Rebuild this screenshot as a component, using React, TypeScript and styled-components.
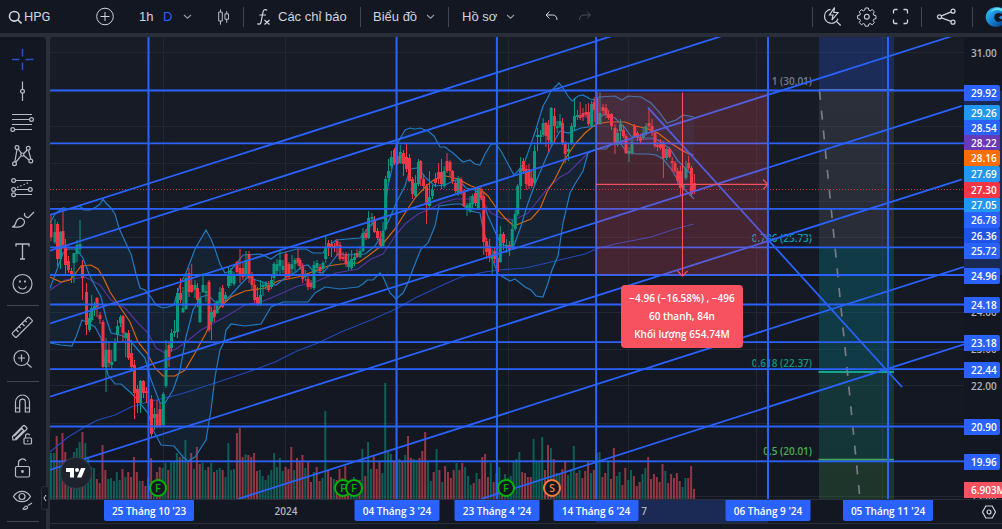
import React from "react";
import styled, { createGlobalStyle } from "styled-components";

const GlobalStyle = createGlobalStyle`
  * { box-sizing: border-box; }
  html, body, #root { height: 100%; }
  body { margin: 0; background: #2a2e39; overflow: hidden; }
  button { font: inherit; color: inherit; background: none; border: 0; padding: 0; cursor: pointer; }
`;

const UI_FONT = `"Liberation Sans", Arial, sans-serif`;
const CHART_FONT = `"Open Sans", "Noto Sans", sans-serif`;

const Page = styled.div`
  display: grid;
  grid-template-rows: 33px minmax(0, 1fr);
  gap: 4px;
  height: 100vh;
  font: 13px ${UI_FONT};
  color: #d1d4dc;
`;

const TopBar = styled.header`
  display: flex;
  align-items: center;
  background: #131722;
  overflow: hidden;
`;

const TopButton = styled.button<{ $w: number; $accent?: boolean; $dim?: boolean }>`
  display: flex;
  flex: none;
  align-items: center;
  justify-content: space-between;
  width: ${(p) => p.$w}px;
  height: 32px;
  white-space: nowrap;
  color: ${(p) => (p.$accent ? "#2962ff" : p.$dim ? "#4a4e59" : "#d1d4dc")};
`;

const IconButton = styled(TopButton)`
  justify-content: center;
`;

const Symbol = styled.button`
  && {
    display: flex;
    align-items: center;
    gap: 2px;
    flex: none;
    width: 83px;
    height: 32px;
    margin-left: 8px;
    font-family: Roboto, sans-serif;
  }
`;

const Group = styled.div<{ $gap?: number; $px: number }>`
  display: flex;
  align-items: center;
  gap: ${(p) => p.$gap ?? 0}px;
  padding: 0 ${(p) => p.$px}px;
`;

const VRule = styled.span`
  flex: none;
  width: 1px;
  height: 20px;
  background: #434651;
`;

const Spacer = styled.span`
  flex: 1;
`;

const Body = styled.div`
  display: grid;
  grid-template-columns: 46px minmax(0, 1fr);
  gap: 4px;
  min-height: 0;
`;

const Tools = styled.nav`
  position: relative;
  display: flex;
  flex-direction: column;
  align-items: center;
  padding-top: 6px;
  background: #131722;
  border-top-right-radius: 4px;
`;

const ToolButton = styled.button<{ $active?: boolean }>`
  && {
    display: flex;
    flex: none;
    align-items: center;
    justify-content: center;
    width: 44px;
    height: 32px;
    margin-right: 2px;
    color: ${(p) => (p.$active ? "#2450c8" : "#b8bbc4")};
  }
`;

const HRule = styled.span`
  flex: none;
  width: 32px;
  height: 1px;
  margin: 6px 0 5px;
  background: #434651;
`;

const Collapse = styled.button`
  && {
    position: absolute;
    right: -3px;
    bottom: 19px;
    display: flex;
    align-items: center;
    justify-content: center;
    width: 8px;
    height: 24px;
    background: #131722;
    border: 1px solid #2a2e39;
    border-radius: 3px;
  }
`;

const ChartArea = styled.main`
  display: grid;
  grid-template-columns: minmax(0, 1fr) 38px;
  grid-template-rows: minmax(0, 1fr) 25px 5px;
  background: #131722;
  border-top-left-radius: 4px;
  overflow: hidden;
  font: 600 10px ${CHART_FONT};
`;

const Pane = styled.section`
  position: relative;
  background: linear-gradient(#181c27, #131722);
  overflow: hidden;
`;

const Plot = styled.svg`
  position: relative;
  display: block;
  width: 100%;
  height: 100%;
`;

const FibLabel = styled.span<{ $c: string }>`
  position: absolute;
  transform: translate(-100%, -50%);
  color: ${(p) => p.$c};
  white-space: nowrap;
  line-height: 16px;
`;

const Marker = styled.button<{ $c: string }>`
  && {
    position: absolute;
    width: 18px;
    height: 18px;
    margin: -9px 0 0 -9px;
    border: 2px solid ${(p) => p.$c};
    border-radius: 50%;
    background: #131722;
    color: ${(p) => p.$c};
    font: 600 11px/14px ${CHART_FONT};
  }
`;

const LogoBadge = styled.a`
  position: absolute;
  display: flex;
  align-items: center;
  justify-content: center;
  width: 30px;
  height: 30px;
  margin: -15px 0 0 -15px;
  border-radius: 50%;
  background: #1e222d;
  box-shadow: 0 0 0 1px #363a45;
`;

const Measure = styled.div`
  position: absolute;
  width: 122px;
  margin-left: -61px;
  padding: 4px 0 5px;
  border-radius: 4px;
  background: #f7525f;
  color: #fff;
  text-align: center;
  line-height: 18px;
  white-space: nowrap;
`;

const PriceAxis = styled.aside`
  position: relative;
  overflow: hidden;
`;

const AxisRange = styled.div`
  position: absolute;
  left: 0;
  width: 100%;
  background: #1a2a54;
`;

const PriceTag = styled.span<{ $bg?: string; $wide?: boolean }>`
  position: absolute;
  left: 0;
  width: ${(p) => (p.$wide ? 44 : 36)}px;
  height: 16px;
  padding-left: 7px;
  transform: translateY(-50%);
  line-height: 16px;
  border-radius: 0 2px 2px 0;
  background: ${(p) => p.$bg ?? "transparent"};
  color: ${(p) => (p.$bg ? "#fff" : "#b2b5be")};
`;

const TimeAxis = styled.div`
  position: relative;
  border-top: 1px solid #2a2e39;
  border-bottom: 1px solid #2a2e39;
`;

const TimeRange = styled(AxisRange)`
  height: 100%;
  width: auto;
`;

const DateTag = styled.span<{ $w?: number }>`
  position: absolute;
  top: 0;
  height: 21px;
  width: ${(p) => (p.$w ? `${p.$w}px` : "auto")};
  transform: translateX(-50%);
  border-radius: 0 0 2px 2px;
  background: ${(p) => (p.$w ? "#2962ff" : "transparent")};
  color: ${(p) => (p.$w ? "#fff" : "#b2b5be")};
  text-align: center;
  line-height: 22px;
  white-space: nowrap;
`;

const AxisCorner = styled.button`
  && {
    display: flex;
    align-items: center;
    justify-content: center;
    padding-left: 12px;
    border-top: 1px solid #2a2e39;
    border-bottom: 1px solid #2a2e39;
  }
`;

/* Chart space: x 50..964, y 37..499 */
const VIEW = { x: 50, y: 37, w: 914, h: 462 };
const left = (x: number) => `${((x - VIEW.x) / VIEW.w) * 100}%`;
const top = (y: number) => `${((y - VIEW.y) / VIEW.h) * 100}%`;

const gridY = [52.5, 89.5, 126.5, 163.5, 201.5, 237.5, 275.5, 312.5, 349.5, 385.5, 423.5, 460.5, 496.5];
const gridX = [163.5, 285.5, 397.5, 508.5, 628.5, 756.5, 882.5];
const levels = [90.5, 143.4, 208.8, 247.4, 275, 304.5, 342.2, 369.2, 426.5, 461.4];
const dates = [148.5, 396.5, 496.9, 596.1, 768, 888];
const trends = [
  [50, 215, 612, 36],
  [50, 250.7, 722, 36],
  [50, 323.5, 951, 36.5],
  [50, 396.7, 962, 105.8],
  [50, 470, 962, 179.3],
  [238, 499, 964, 266.8],
  [481, 499, 964, 344.4],
  [648, 107.7, 902, 387],
];

const upper =
  "50 223 55 214 63 208 70 209 80 206 84 210 90 210 96 207 100 204 103 199 106 203 110 207 115 214 119 228 128 248 131 254 136 274 140 288 145 290 151 297 156 305 163 308 168 307 174 305 176 297 181 282 186 273 195 249 206 230 211 239 215 249 220 264 225 273 230 271 236 264 243 255 261 254 271 259 278 254 297 249 306 249 313 253 323 253 326 248 336 240 360 238 368 228 376 220 384 218 388 186 393 164 396 146 405 130 410 128 415 129 420 128 428 131 434 136 440 147 445 147 453 153 463 162 470 160 475 164 480 165 485 154 491 144 496 144 501 151 508 164 514 175 518 171 525 161 531 144 536 129 543 106 547 99 551 91 559 83 563 88 568 96 572 101 578 96 583 95 590 99 596 100 599 97 615 96 622 100 628 96 641 97 651 103 660 113 667 123 676 120 683 115 694 117";
const lower =
  "50 343 61 345 72 346 76 337 82 320 88 323 95 327 101 338 103 353 108 375 115 384 121 384 130 392 136 398 143 407 148 413 153 430 161 445 174 446 183 457 188 461 195 457 206 440 211 410 215 377 220 350 224 342 226 330 231 324 245 326 261 324 271 307 283 302 297 302 308 302 315 293 325 287 340 289 358 287 363 284 367 280 373 280 380 273 383 277 390 293 396 299 403 293 408 283 413 269 421 249 428 243 435 226 439 206 455 204 461 204 470 211 480 213 483 229 490 253 498 274 510 281 515 279 525 287 531 290 536 296 543 297 548 283 552 270 558 256 563 223 570 193 575 184 583 171 588 153 596 149 606 149 611 144 620 143 626 151 636 154 648 154 656 155 663 159 672 170 679 183 685 190 694 199";
const fast =
  "50 288 55 275 63 253 68 249 76 249 83 258 89 274 94 284 101 297 106 318 111 333 120 335 128 338 138 350 145 358 150 377 155 390 160 403 165 403 173 390 180 370 186 337 193 310 201 297 208 295 215 302 223 302 231 295 240 285 248 277 256 280 266 283 276 285 285 278 296 272 302 266 308 265 313 271 323 273 331 263 338 254 348 255 365 254 375 246 381 236 390 218 396 203 405 186 410 169 418 168 426 178 435 186 445 185 458 179 466 188 475 190 481 196 488 216 497 236 501 244 513 248 521 226 528 203 535 184 547 156 550 149 560 131 568 133 581 128 596 126 598 118 606 114 615 118 625 128 631 136 645 138 655 138 662 143 670 149 678 161 685 168 693 176";
const basis =
  "50 277 61 282 70 280 75 274 81 266 91 265 98 269 103 277 110 292 120 307 130 322 138 342 147 353 155 368 163 376 175 376 185 370 195 353 206 333 215 313 221 306 231 297 245 291 265 288 278 281 298 277 315 271 328 266 341 264 358 263 368 256 381 246 395 229 405 213 415 198 426 186 435 179 446 176 458 179 471 186 480 189 488 196 497 209 505 218 514 226 521 223 531 219 540 209 547 192 555 179 565 159 575 144 585 133 596 124 608 122 625 122 635 126 645 128 658 133 671 143 681 150 693 156";
const slow =
  "50 290 65 280 85 277 100 285 111 300 125 308 138 323 148 333 156 348 165 353 176 349 186 342 201 330 225 317 245 305 261 302 278 295 298 286 315 282 336 273 358 269 371 259 383 254 395 236 405 224 418 214 430 209 441 203 455 199 468 199 481 199 491 213 501 218 514 220 528 213 536 203 547 189 560 177 568 173 578 163 588 153 598 149 615 143 635 140 655 139 671 144 681 149 694 155";
const longAvg =
  "50 452 68 437 88 425 98 420 115 415 131 407 148 402 181 394 215 383 248 372 275 362 297 351 318 343 341 332 371 320 398 308 415 298 445 284 461 277 485 272 498 270 525 268 547 263 568 258 585 254 596 249 615 244 651 237 675 229 694 224";

const bandArea = (() => {
  const nums = lower.split(" ");
  const back: string[] = [];
  for (let i = nums.length - 2; i >= 0; i -= 2) back.push(nums[i], nums[i + 1]);
  return `${upper} ${back.join(" ")}`;
})();

/* direction, x, high, body top, body bottom, low */
const candles = `
r51 214 224 237 241|g55 219 232 242 244|r57.5 222 224 259 266|g60.5 231 232 259 269|r63 209 231 245 249|r65.5 239 245 265 274|r68.5 256 261 270 273|r71.5 268 271 274 283|g74 253 253 263 283|g77 240 245 254 262|g80 220 244 249 254|r82.5 260 265 278 300|r86.5 283 292 325 335|g89.5 313 318 330 332|g91.7 295 308 320 322|g94.5 302 306 310 316|r97 297 298 307 317|r100 312 315 319 324|r103 320 322 367 368|g106 338 350 367 392|r109 342 350 363 367|g111.7 350 362 365 370|g115 338 343 361 362|g117.5 320 326 335 343|g120.5 315 317 323 327|r123 315 316 333 342|g125.7 332 333 338 357|r128.5 330 333 358 360|r131.5 340 353 367 369|r134.5 360 365 393 419|r137.5 385 389 403 413|g140.5 380 381 403 413|r143.5 380 381 393 398|r146.5 387 391 393 403|r151.5 395 399 434 438|g154.5 408 414 418 430|r157 400 414 426 428|r160 403 409 427 428|g163.3 392 394 425 427|g166 340 350 386 388|r169 342 345 357 367|g171.5 329 333 348 352|g174.5 320 331 333 337|g177.5 288 293 332 338|r180.5 278 293 300 303|g183 287 308 312 313|g186 273 278 309 310|r189 268 273 292 297|r191.7 264 285 292 293|g195 280 285 290 298|r197.5 283 288 300 307|g200 292 298 322 323|g203 273 285 292 293|g206 285 291 293 302|r209 280 282 330 332|g211.5 307 312 322 340|r214.3 303 310 317 322|g217 300 302 313 314|g220 287 292 303 307|r222.6 285 288 307 308|g225.5 292 295 299 301|g228.5 266 274 286 288|g231 268 271 283 286|g234 272 274 284 286|r237 261 262 272 275|r240 249 268 275 283|r243 263 268 277 280|g246 251 260 276 279|r249 251 254 278 283|r252 272 274 285 290|r254.7 280 285 300 303|r257.5 287 297 305 306|g260.5 280 295 305 306|g263 282 285 287 296|g266 281 283 286 290|r268.7 281 285 290 292|g271.5 275 280 287 289|g274 262 264 278 282|g277 259 264 271 276|g280 251 260 266 276|g283 260 266 270 273|r286 252 254 277 280|r289 262 264 277 279|g292 255 264 269 275|g295 258 260 264 272|r298 249 258 263 266|r300 258 260 266 270|r302.7 263 266 279 283|g305.3 270 275 277 281|r308 275 279 287 290|r311 280 283 287 289|g314 261 265 288 290|g317 260 263 268 270|r320 264 267 271 276|g323 261 263 269 273|g325.7 236 248 259 263|r328.5 240 243 247 256|r331.5 240 244 248 257|r334.5 243 246 248 252|r337 239 241 246 256|r340 242 245 259 261|r343 252 257 259 261|r346 252 254 264 267|g348.6 253 261 267 270|g351.6 250 259 268 270|g354.5 253 257 260 266|r357 249 253 257 258|g360 246 251 257 258|g363 228 233 251 252|r366 229 233 238 240|g368.6 211 218 238 239|g372 213 217 219 226|r374.5 216 219 232 233|r377.5 228 231 238 240|r380.3 231 239 245 247|g383 222 231 246 247|g385.6 176 179 229 231|g388.5 159 171 178 182|g391.3 151 157 166 169|r394.5 148 150 163 165|r397.3 143 156 164 165|g400.3 145 152 163 164|r403.5 150 153 164 176|r406.5 144 157 169 172|r409.5 154 158 181 182|r412.6 177 179 194 199|g415.5 175 183 196 197|g418.5 159 162 184 186|r420.7 160 161 179 186|r423.6 174 179 186 191|r426.6 184 186 205 224|g429.5 171 197 206 209|g432.5 185 190 196 199|r435.5 173 179 183 187|r438.6 163 172 179 184|r441.5 159 172 184 189|g444.2 166 171 186 188|r447 153 161 171 173|r450 160 162 171 177|r452.6 170 171 181 184|r455.6 180 183 191 193|g458.2 176 178 193 196|r461 177 179 193 195|r464 189 192 206 207|g467 203 205 208 216|g470 196 203 211 213|g472.6 194 196 204 209|r475.5 189 193 203 206|g478.3 186 188 208 210|r481 187 191 198 200|r483.7 192 196 242 255|r486.6 238 241 252 259|r489.6 239 246 258 262|g492.2 249 256 259 274|r494.7 247 251 259 263|r497.5 255 258 272 275|g500.3 226 234 262 263|r503.5 232 234 243 250|g506.6 239 245 247 253|r509.6 241 245 250 256|g512.2 220 229 248 249|g515.2 210 214 229 231|g517.7 184 186 214 216|g520.6 157 168 186 199|r523.5 158 161 171 174|r526.2 165 169 184 190|r529 164 169 186 189|r531.7 171 178 186 188|g534.5 145 151 183 185|g537.5 128 135 137 151|g540.5 130 135 137 143|g543.2 118 123 135 137|r546 122 123 136 147|r548.6 120 125 140 152|g551.2 107 108 143 146|r554.5 108 116 126 144|g557.2 121 126 128 133|g560 114 121 126 128|r562.5 118 123 143 145|r565.2 141 143 154 163|g568.5 143 149 152 161|g571.6 123 126 143 145|g574.5 98 116 127 130|g577.5 110 115 117 120|r580.2 102 115 118 120|r583 108 113 117 121|r586 104 112 115 118|r588.6 103 112 124 126|g591.6 101 104 126 128|r594.2 97 102 110 122|r597 91 99 124 125|g600 92 113 124 125|r603 104 107 111 115|r606 104 108 114 118|r608.6 110 114 118 120|r611.5 113 114 126 130|r615 124 128 143 154|g617.6 129 133 145 147|g620.5 119 124 131 145|r623.4 125 130 136 138|r626 134 136 153 154|g629 147 151 154 162|g632 139 142 153 155|r634.7 124 126 136 138|r637.5 131 133 138 141|r640.5 134 138 141 143|g643.2 127 133 138 140|g646 123 126 134 136|r649 108 123 126 130|r652 119 126 133 136|r655 132 133 146 148|r657.6 142 145 147 151|r660.5 139 143 148 150|r663.4 141 143 158 178|g666.5 148 149 158 160|r669.6 147 149 157 158|r672.2 157 161 163 172|r675 161 163 171 173|r677.7 168 171 181 184|r680.4 166 171 188 196|g683.3 184 185 188 190|g686 161 168 178 180|r688.6 156 163 168 170|r691.5 166 168 194 197|r694.4 174 183 191 194`
  .trim()
  .split("|")
  .map((row) => {
    const [x, high, a, b, low] = row.slice(1).split(" ").map(Number);
    return { up: row[0] === "g", x, high, a, b, low };
  });

/* volume columns, evenly spread between two x positions */
const volumes = [
  {
    from: 51,
    to: 297,
    bars:
      "g46 g46 r63 g37 r66 r47 g37 r32 g47 g51 g57 r67 g56 g42 g32 g31 r20 r16 r54 r29 g20 g21 g18 g27 g19 r30 g22 r27 r22 r42 r27 g18 r18 r13 r22 r41 g18 r27 r32 g31 g36 r29 g37 g37 g46 r42 g42 g59 r39 r46 g30 r52 r35 g36 g29 r32 g36 r27 g29 g31 r29 g22 g56 g29 g30 r66 r71 r42 g45 r44 r42 r46 r28 g29 g23 g19 g24 g29 g46 g32 g41 g28 r32 r30 r52 g29 r41",
  },
  {
    from: 299.6,
    to: 545,
    bars:
      "r38 r44 g31 r38 r17 g27 r32 r18 g21 g88 r29 r22 g20 r19 r30 r21 r33 r16 g17 g22 g17 r19 g50 r23 g57 g30 r44 r30 r37 g26 g116 g47 g45 r37 r39 g40 r37 g44 r63 r41 g40 g39 r41 r48 r67 g37 g18 r27 g50 r29 g17 r33 r27 r21 r29 g36 r29 r36 g32 g23 g14 r16 g26 r20 r42 r45 r22 g36 r17 r26 g32 r19 g25 g21 g23 g37 g40 g47 r27 r26 r22 r22 g60 g37 g38 g62 r29",
  },
  {
    from: 548,
    to: 694,
    bars:
      "r54 g51 r40 g26 g25 r30 r37 g24 g29 g53 r26 g29 r21 r28 r37 g26 r29 r46 g47 r22 r26 g38 r20 r51 g23 g27 r14 r31 g19 g29 r23 r13 r17 g25 g31 r42 r20 r25 r22 r17 r35 g28 r16 r25 r21 r26 r18 g12 g21 r21 r33 r10",
  },
].flatMap(({ from, to, bars }) => {
  const list = bars.split(" ");
  return list.map((b, i) => ({
    x: from + ((to - from) * i) / (list.length - 1),
    up: b[0] === "g",
    h: Number(b.slice(1)),
  }));
});

const BLUE = "#2962ff";
const SKY = "#2196f3";

const priceTags: { y: number; t: string; bg?: string; wide?: boolean }[] = [
  { y: 53, t: "31.00" },
  { y: 312, t: "24.00" },
  { y: 349, t: "23.00" },
  { y: 386, t: "22.00" },
  { y: 423, t: "21.00" },
  { y: 496, t: "19.00" },
  { y: 93, t: "29.92", bg: BLUE },
  { y: 113, t: "29.26", bg: SKY },
  { y: 128, t: "28.54", bg: BLUE },
  { y: 143, t: "28.22", bg: "#673ab7" },
  { y: 158, t: "28.16", bg: "#ff6d00" },
  { y: 174, t: "27.69", bg: SKY },
  { y: 205, t: "27.05", bg: SKY },
  { y: 190, t: "27.30", bg: "#f23645" },
  { y: 220, t: "26.78", bg: BLUE },
  { y: 236, t: "26.36", bg: "#1e53e5" },
  { y: 251, t: "25.72", bg: BLUE },
  { y: 276, t: "24.96", bg: BLUE },
  { y: 305, t: "24.18", bg: BLUE },
  { y: 343, t: "23.18", bg: BLUE },
  { y: 370, t: "22.44", bg: BLUE },
  { y: 427, t: "20.90", bg: BLUE },
  { y: 462, t: "19.96", bg: BLUE },
  { y: 490, t: "6.903M", bg: "#f7525f", wide: true },
];

const dateTags: { x: number; t: string; w?: number }[] = [
  { x: 286, t: "2024" },
  { x: 644, t: "7" },
  { x: 149, t: "25 Tháng 10 '23", w: 90 },
  { x: 397, t: "04 Tháng 3 '24", w: 85 },
  { x: 497, t: "23 Tháng 4 '24", w: 85 },
  { x: 596, t: "14 Tháng 6 '24", w: 85 },
  { x: 768, t: "06 Tháng 9 '24", w: 85 },
  { x: 888, t: "05 Tháng 11 '24", w: 90 },
];

const Icon = ({ children, s = 28, w = 1 }: { children: React.ReactNode; s?: number; w?: number }) => (
  <svg width={s} height={s} viewBox={`0 0 ${s} ${s}`} fill="none" stroke="currentColor" strokeWidth={w} aria-hidden="true">
    {children}
  </svg>
);

const Chevron = () => (
  <svg width="9" height="6" viewBox="0 0 9 6" fill="none" stroke="#9598a1" strokeWidth="1.2" aria-hidden="true">
    <path d="M1 1l3.500 3.200L8 1" />
  </svg>
);

const tools: ({ label: string; icon: React.ReactNode; active?: boolean } | null)[] = [
  { label: "Con trỏ", active: true, icon: <path d="M4 14.500h7.500M17.500 14.500h8M14.500 4v7.500M14.500 17.500v7.500" strokeWidth="1.500" /> },
  { label: "Đường dọc", icon: <><path d="M14.500 4.500v7.800M14.500 16.200v7.800" /><circle cx="14.500" cy="14.200" r="1.900" /></> },
  {
    label: "Fibonacci",
    icon: <><path d="M4 5.500h20M4 10.500h17.500M4 15.500h20M6.500 20.500H24" /><circle cx="23.500" cy="10.500" r="1.900" /><circle cx="4.800" cy="20.500" r="1.900" /></>,
  },
  {
    label: "Mẫu hình",
    icon: (
      <>
        <path d="M9 8.500L6.800 21M10.200 7.800l3.200 4.500M15.800 12.500l3.300-3.500M12.800 15.200L8 21M16 14.800l5 4.200M20.500 9.500l2.300 8.500" />
        <circle cx="9" cy="6.500" r="1.900" /><circle cx="20.200" cy="7.300" r="1.900" /><circle cx="14.300" cy="13.600" r="1.600" />
        <circle cx="6.500" cy="22.800" r="1.900" /><circle cx="22.800" cy="20" r="1.900" />
      </>
    ),
  },
  {
    label: "Dự báo",
    icon: (
      <>
        <path d="M7.500 7.500H24M7.500 16.500h13M7.500 21.500H24" /><path d="M9 14.500L22 9" strokeDasharray="1.500 2" />
        <circle cx="5.600" cy="7.500" r="1.900" /><circle cx="5.600" cy="16.500" r="1.900" /><circle cx="22.300" cy="16.500" r="1.900" /><circle cx="5.600" cy="21.800" r="1.900" />
      </>
    ),
  },
  {
    label: "Cọ vẽ",
    icon: <><path d="M4 22c3-.3 3.200-2.200 4-4.800 1-3.200 3.500-4.700 6-3.700 2.800 1.200 3.200 4 1.500 6.200-1.500 2-4 2.500-6.500 2.400-1.600 0-3.400.1-5-.1z" /><path d="M17 8q-1.500 2 .5 3.500t3 1L26 7" /></>,
  },
  { label: "Văn bản", icon: <path d="M8 9.500V7h13v2.500M14.500 7v15M12 22h5" strokeWidth="1.300" /> },
  {
    label: "Biểu tượng",
    icon: <><circle cx="14.500" cy="15" r="9.500" /><path d="M10.500 17.500c.8 1.600 2.200 2.500 4 2.500s3.200-.9 4-2.500" /><path d="M12 11.500v2M17 11.500v2" strokeWidth="1.800" /></>,
  },
  null,
  {
    label: "Đo",
    icon: <><path d="M4.500 19.800L19.800 4.500q.8-.8 1.600 0l2.600 2.600q.8.800 0 1.600L8.700 24q-.8.800-1.600 0l-2.600-2.600q-.8-.8 0-1.600z" /><path d="M8 16.500l2.500 2.500M11 13.500l1.700 1.700M14 10.500l2.500 2.500M17 7.500l1.700 1.700" /></>,
  },
  { label: "Phóng to", icon: <><circle cx="13.500" cy="13" r="7.500" /><path d="M13.500 9.500v7M10 13h7M19 18.500l4.500 4" /></> },
  null,
  {
    label: "Nam châm",
    icon: <><path d="M7.500 23v-10a7 7 0 0 1 14 0v10h-4.200v-10a2.800 2.800 0 0 0-5.600 0v10z" /><path d="M7.500 19h4.200M17.300 19h4.200" /></>,
  },
  {
    label: "Khóa vẽ",
    icon: <><path d="M5 18.800l-.5-3.300L15 5q1-1 2 0l1.500 1.500q1 1 0 2L8.300 18.700zM13.200 7l3.300 3.300M6 15.200l8.500-8.300M7.200 18l8.800-8.700" /><rect x="16" y="17" width="7.500" height="6" rx="1" /><path d="M17.500 17v-2a2.200 2.200 0 0 1 4.200-.8M19.700 19.300v1.500" /></>,
  },
  {
    label: "Khóa",
    icon: <><rect x="7.500" y="13.500" width="14" height="10.500" rx="1.500" /><path d="M10.500 13.500V10a4 4 0 0 1 7.500-2M14.500 17.500v2.500" /><circle cx="14.500" cy="18.500" r=".8" /></>,
  },
  {
    label: "Ẩn",
    icon: <><path d="M5.500 11.500c2-3.500 5-5.200 8.500-5.200s6.500 1.700 8.500 5.200c-2 3.500-5 5.200-8.500 5.200s-6.500-1.700-8.500-5.200z" /><circle cx="14" cy="11.500" r="3" /><path d="M14.500 24c1.500 0 1.500-2.500 3.500-3 1.500 0 2 1.500 1 2.500s-3 1-4.500.5zM20 20.500l4-2.500" /></>,
  },
  null,
];

const poly = (points: string, stroke: string, width = 1) => (
  <polyline points={points} fill="none" stroke={stroke} strokeWidth={width} />
);

function ChartPlot() {
  return (
    <Plot viewBox={`${VIEW.x} ${VIEW.y} ${VIEW.w} ${VIEW.h}`} preserveAspectRatio="none" role="img" aria-label="Biểu đồ HPG">
      <g stroke="#222631">
        {gridY.map((y) => <path key={y} d={`M50 ${y}H964`} />)}
        {gridX.map((x) => <path key={x} d={`M${x} 37V499`} />)}
      </g>
      <rect x="819" y="37" width="75" height="53" fill="#2962ff" fillOpacity=".23" />
      <rect x="819" y="90" width="75" height="157.500" fill="#787b86" fillOpacity=".2" />
      <rect x="819" y="247.500" width="75" height="124.500" fill="#00bcd4" fillOpacity=".2" />
      <rect x="819" y="372" width="75" height="88" fill="#16b08c" fillOpacity=".2" />
      <rect x="819" y="460" width="75" height="39" fill="#4caf50" fillOpacity=".2" />
      <path d="M819 89.500H894" stroke="#787b86" />
      <path d="M818.500 372H894" stroke="#14a58c" strokeWidth="1.800" />
      <path d="M818.500 459.700H894" stroke="#43a556" strokeWidth="1.800" />
      <path d="M819.500 91L860 499" stroke="#787b86" strokeWidth="1.700" strokeDasharray="9 10.800" />
      {volumes.map((v, i) => (
        <rect key={i} x={v.x - 1} y={499 - v.h} width="2" height={v.h} fill={v.up ? "#089981" : "#f7525f"} fillOpacity=".55" />
      ))}
      <polygon points={bandArea} fill="#2196f3" fillOpacity=".07" />
      {poly(longAvg, "#2048b8", 1.2)}
      {poly(slow, "#5433a0", 1.2)}
      {poly(basis, "#d9640c", 1.2)}
      {poly(upper, "#207ac4", 1.2)}
      {poly(lower, "#207ac4", 1.2)}
      {poly(fast, "#207ac4", 1.2)}
      {candles.map((c, i) => {
        const color = c.up ? "#089981" : "#f23645";
        return (
          <g key={i} fill={color}>
            <rect x={c.x - 0.5} y={c.high} width="1" height={c.low - c.high} />
            <rect x={c.x - 1.5} y={c.a} width="3" height={c.b - c.a} />
          </g>
        );
      })}
      <path d="M50 189.500H964" stroke="#f23645" strokeDasharray="1 2" opacity=".8" />
      <g stroke={BLUE} strokeWidth="1.800">
        {trends.map(([a, b, c, d], i) => <path key={i} d={`M${a} ${b}L${c} ${d}`} />)}
        {levels.map((y) => <path key={y} d={`M50 ${y}H964`} />)}
        {dates.map((x) => <path key={x} d={`M${x} 37V499`} strokeWidth="2" />)}
      </g>
      <rect x="596" y="92.500" width="172" height="182.500" fill="#f7525f" fillOpacity=".21" />
      <g stroke="#f7525f" strokeWidth="1.100" fill="none">
        <path d="M596 184.400H768M763 179.500l5 4.900-5 4.900" />
        <path d="M682.500 92.500V275.500M677.500 271l5 5 5-5" />
      </g>
    </Plot>
  );
}

export default function App() {
  return (
    <Page>
      <GlobalStyle />
      <TopBar>
        <Symbol>
          <Icon s={14} w={1.6}><circle cx="6.300" cy="6.300" r="4.800" /><path d="M9.800 9.800l3.700 3.700" /></Icon>
          HPG
        </Symbol>
        <IconButton $w={28} aria-label="So sánh"><Icon><circle cx="14" cy="13.500" r="8.300" /><path d="M14 9v9M9.500 13.500h9" /></Icon></IconButton>
        <Group $px={20} $gap={10}>
          <TopButton $w={14}>1h</TopButton>
          <TopButton $w={10} $accent>D</TopButton>
          <TopButton $w={9} aria-label="Khoảng thời gian"><Chevron /></TopButton>
        </Group>
        <IconButton $w={25} aria-label="Kiểu nến">
          <Icon><path d="M7.500 8.500h4v10h-4zM9.500 5.500v3M9.500 18.500v4M14.500 10.500h4v6h-4zM16.500 7.500v3M16.500 16.500v4" /></Icon>
        </IconButton>
        <Group $px={6}><VRule /></Group>
        <IconButton $w={28} aria-label="Hàm số">
          <Icon w={1.2}><path d="M17 7.500c-.8-1.400-3.500-1.400-4 1.500l-2 10.500c-.4 1.800-2.500 2.200-3.500 1M9.500 12H16M14.500 17l5 4.500M19.500 17l-5 4.500" /></Icon>
        </IconButton>
        <TopButton $w={70}>Các chỉ báo</TopButton>
        <Group $px={12}><VRule /></Group>
        <TopButton $w={62}>Biểu đồ <Chevron /></TopButton>
        <Group $px={13}><VRule /></Group>
        <TopButton $w={53}>Hồ sơ <Chevron /></TopButton>
        <Group $px={22} $gap={6}>
          <IconButton $w={28} aria-label="Hoàn tác"><Icon><path d="M12.500 8.500L9 12l3.500 3.500M9 12h6.500c2.800 0 4.500 1.700 4.500 5" /></Icon></IconButton>
          <IconButton $w={28} $dim aria-label="Làm lại"><Icon><path d="M16 8.500l3.500 3.500-3.500 3.500M19.500 12H13c-2.800 0-4.500 1.700-4.500 5" /></Icon></IconButton>
        </Group>
        <Spacer />
        <VRule />
        <Group $px={6} $gap={6}>
          <IconButton $w={28} aria-label="Tìm nhanh">
            <Icon w={1.2}><path d="M11.500 6.300a7 7 0 1 0 7.500 9.500M17 17.800l4.700 4.700M15.500 4.500l-5 7.500h3.500l-1 5 6-7.500h-4.200z" /></Icon>
          </IconButton>
          <IconButton $w={28} aria-label="Cài đặt">
            <Icon w={1.1}>
              <path d="M12.300 5h3.400l.6 2.500 1.500.6 2.200-1.300 2.400 2.400-1.300 2.200.6 1.500 2.500.6v3.400l-2.500.6-.6 1.500 1.300 2.200-2.400 2.400-2.200-1.300-1.500.6-.6 2.300h-3.400l-.6-2.300-1.500-.6L8 23.600l-2.400-2.400L6.900 19l-.6-1.500-2.500-.6v-3.400l2.500-.6.600-1.500-1.300-2.200L8 6.800l2.200 1.300 1.500-.6z" transform="translate(1.200 .500) scale(.900)" />
              <circle cx="13.800" cy="13.700" r="2.400" />
            </Icon>
          </IconButton>
          <IconButton $w={28} aria-label="Toàn màn hình">
            <Icon w={1.3}><path d="M6.500 10.500V8q0-1.500 1.500-1.500h2.500M16.500 6.500H19q1.500 0 1.500 1.500v2.500M20.500 16.500V19q0 1.500-1.500 1.500h-2.500M10.500 20.500H8q-1.500 0-1.500-1.500v-2.500" /></Icon>
          </IconButton>
        </Group>
        <VRule />
        <Group $px={11}>
          <IconButton $w={28} aria-label="Chia sẻ">
            <Icon w={1.2}><path d="M8.500 12.900l9.500-4M8.500 14.900l9.500 3.500" /><circle cx="6.500" cy="13.800" r="2" /><circle cx="20" cy="8.200" r="2" /><circle cx="20" cy="19.200" r="2" /></Icon>
          </IconButton>
        </Group>
        <VRule />
        <IconButton $w={29} aria-label="Tài khoản">
          <svg width="29" height="28" viewBox="0 0 29 28" aria-hidden="true">
            <defs>
              <linearGradient id="brand" x1="0" y1="0" x2="1" y2="1">
                <stop offset="0" stopColor="#3cc8f0" />
                <stop offset=".5" stopColor="#1588d8" />
                <stop offset="1" stopColor="#0b3f8c" />
              </linearGradient>
            </defs>
            <path d="M29 5C25 3.500 20 3.500 16 7c-4.500 4-4.200 10.500 0 14.200 4 3.300 9 3.300 13 1v-4.500c-2.500 1.500-5 1.300-6.500-.2-1.700-1.700-1.700-4.800 0-6.500 1.700-1.500 4.500-1.500 6.500 0z" fill="url(#brand)" />
            <path d="M29 5.500c-5-2-10.500 0-11.500 4.500 3-3.500 7.500-4 11.500-1.500z" fill="#5fe0f5" />
            <path d="M29 12.500l-3.500 2 3.500 2z" fill="#2196f3" />
          </svg>
        </IconButton>
      </TopBar>

      <Body>
        <Tools aria-label="Công cụ vẽ">
          {tools.map((t, i) =>
            t ? (
              <ToolButton key={i} $active={t.active} aria-label={t.label}><Icon w={1.2}>{t.icon}</Icon></ToolButton>
            ) : (
              <HRule key={i} />
            )
          )}
          <Collapse aria-label="Thu gọn">
            <svg width="4" height="8" viewBox="0 0 4 8" fill="none" stroke="#d1d4dc"><path d="M3 1L1 4l2 3" /></svg>
          </Collapse>
        </Tools>

        <ChartArea>
          <Pane>
            <FibLabel $c="#787b86" style={{ left: left(812), top: top(81) }}>1 (30.01)</FibLabel>
            <FibLabel $c="#00a5b9" style={{ left: left(812), top: top(238) }}>0.786 (25.73)</FibLabel>
            <FibLabel $c="#0d947e" style={{ left: left(812), top: top(363) }}>0.618 (22.37)</FibLabel>
            <FibLabel $c="#4caf50" style={{ left: left(812), top: top(451) }}>0.5 (20.01)</FibLabel>
            <ChartPlot />
            {[343, 354, 158, 506].map((x) => (
              <Marker key={x} $c="#00b300" style={{ left: left(x), top: top(488) }}>F</Marker>
            ))}
            <Marker $c="#f57c3e" style={{ left: left(552), top: top(488) }}>S</Marker>
            <LogoBadge href="#" aria-label="TradingView" style={{ left: left(76), top: top(473) }}>
              <svg width="20" height="12" viewBox="0 0 20 12" fill="#fff" aria-hidden="true">
                <path d="M0 1h8v9.500H4V5H0zM15 1h4.500l-4 9.500H11z" />
                <circle cx="11" cy="3" r="2" />
              </svg>
            </LogoBadge>
            <Measure style={{ left: left(682), top: top(285) }}>
              −4.96 (−16.58%) , −496<br />60 thanh, 84n<br />Khối lượng 654.74M
            </Measure>
          </Pane>
          <PriceAxis>
            <AxisRange style={{ top: top(91), height: `${(184 / VIEW.h) * 100}%` }} />
            {priceTags.map((p) => (
              <PriceTag key={p.t} $bg={p.bg} $wide={p.wide} style={{ top: top(p.y) }}>{p.t}</PriceTag>
            ))}
          </PriceAxis>
          <TimeAxis>
            <TimeRange style={{ left: left(596), right: `${((964 - 768) / VIEW.w) * 100}%` }} />
            {dateTags.map((d) => (
              <DateTag key={d.t} $w={d.w} style={{ left: left(d.x) }}>{d.t}</DateTag>
            ))}
          </TimeAxis>
          <AxisCorner aria-label="Cài đặt trục">
            <Icon s={16} w={1.2}><path d="M4.800 2h6.400L14.500 8l-3.300 6H4.800L1.500 8z" /><circle cx="8" cy="8" r="2" /></Icon>
          </AxisCorner>
        </ChartArea>
      </Body>
    </Page>
  );
}
